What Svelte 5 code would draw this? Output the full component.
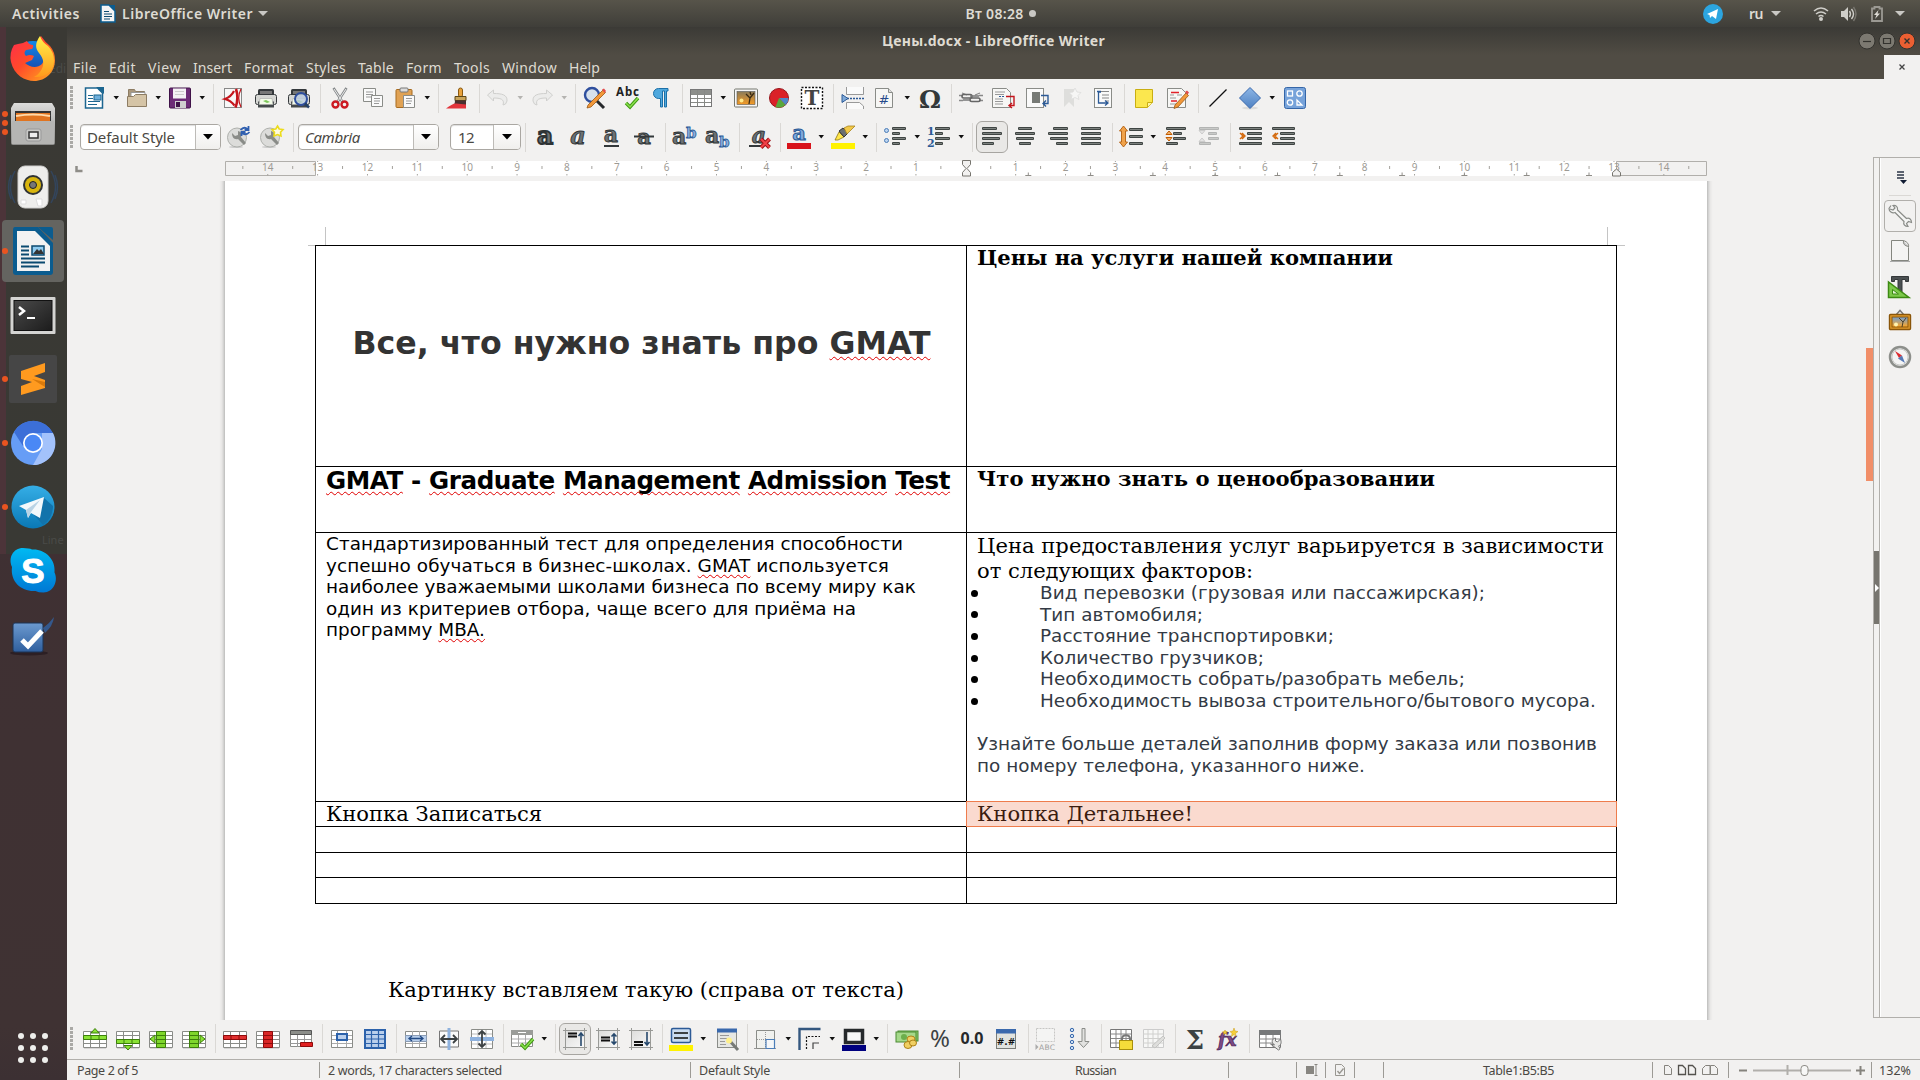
<script>
  // Spreads letters so a label takes exactly the given width.
  function fit(node, width) {
    const natural = node.getBoundingClientRect().width;
    const count = node.textContent.length;
    node.style.letterSpacing = (width - natural) / count + 'px';
  }

  // Turns item centres into the gaps between neighbouring flex items.
  const sizes = { sep: 1, v: 8, vd: 8 };
  function lay(items, start) {
    let right = start;
    return items.map(([name, at]) => {
      const w = sizes[name] ?? 24;
      const gap = at - w / 2 - right;
      right = at + w / 2;
      return { name, gap };
    });
  }

  const top = lay([
    ['new', 94], ['v', 116], ['open', 137], ['v', 158], ['save', 180], ['v', 202], ['sep', 213],
    ['pdf', 233], ['print', 266], ['preview', 299], ['sep', 320], ['cut', 340], ['copy', 373], ['paste', 405], ['v', 427], ['sep', 438],
    ['brush', 458], ['sep', 479], ['undo', 498], ['vd', 520], ['redo', 542], ['vd', 564], ['sep', 575],
    ['find', 595], ['spell', 628], ['pilcrow', 661], ['sep', 682], ['table', 701], ['v', 723], ['image', 746], ['chart', 779], ['textbox', 812], ['sep', 833],
    ['pagebreak', 853], ['field', 884], ['v', 907], ['omega', 930], ['sep', 951], ['link', 971], ['footnote', 1003], ['endnote', 1037], ['bookmark', 1071], ['crossref', 1103], ['sep', 1124],
    ['comment', 1144], ['track', 1177], ['sep', 1198], ['line', 1218], ['diamond', 1250], ['v', 1272], ['shapes', 1295]
  ], 74);
  const styleTools = lay([['upd', 239], ['newstyle', 272], ['sep', 293]], 221);
  const format = lay([
    ['sep', 526], ['bold', 545.5], ['italic', 579], ['under', 612], ['strike', 645], ['sep', 666], ['sup', 685], ['sub', 718], ['sep', 740], ['clear', 761], ['sep', 781],
    ['fcolor', 800], ['v', 822], ['hilite', 844], ['v', 866], ['sep', 877], ['bullets', 896], ['v', 918], ['numbers', 940], ['v', 962], ['sep', 973],
    ['left', 993], ['center', 1026], ['right', 1059], ['just', 1092], ['sep', 1113], ['spacing', 1132], ['v', 1154], ['pinc', 1177], ['pdec', 1210], ['sep', 1231], ['iinc', 1251], ['idec', 1284]
  ], 522);
  const bottom = lay([
    ['rowup', 95], ['rowdn', 128], ['coll', 161], ['colr', 194], ['sep', 215], ['delrow', 235], ['delcol', 268], ['deltbl', 301], ['sep', 322], ['selcell', 342], ['seltbl', 375], ['sep', 396],
    ['merge', 416], ['splitv', 449], ['splith', 482], ['sep', 503], ['optim', 522], ['v', 544], ['sep', 555], ['vtop', 575], ['vmid', 608], ['vbot', 641], ['sep', 662],
    ['bgcol', 681], ['v', 703], ['autofmt', 726.500], ['sep', 747], ['borders', 766], ['v', 788], ['bstyle', 810], ['v', 832], ['bcolor', 854], ['v', 876], ['sep', 887],
    ['money', 907], ['percent', 940], ['decimal', 972], ['numfmt', 1006], ['sep', 1028], ['caption', 1047], ['sort', 1080], ['sep', 1101], ['protect', 1122], ['unprotect', 1154], ['sep', 1175], ['sum', 1195], ['fx', 1228], ['sep', 1249], ['props', 1269.500]
  ], 74);
  const pressed = ['left', 'vtop'];

  const bars = (list, c = '#3f4543') => list.map(([x, y, w]) => `<rect x="${x}" y="${y}" width="${w}" height="3" rx="1" fill="${c}"/><path d="M${x + 1} ${y + 1.5}h${w - 2}" stroke="#8b908e" stroke-width=".8"/>`).join('');
  const glyph = (t, x, y, s, c, extra = '') => `<text x="${x}" y="${y}" font-size="${s}" fill="${c}" ${extra}>${t}</text>`;
  const serif = 'font-family="DejaVu Serif" font-weight="bold" stroke="#2e3335" stroke-width=".9"';
  const heavy = 'font-family="DejaVu Serif" font-weight="bold" stroke="#2e3335" stroke-width="1.8"';
  const grid = '<path d="M1 21h22" stroke="#bbb"/><path d="M.5 4.500h23v16h-23z" fill="#fff" stroke="#8a8c88"/><path d="M1 8.500h22M1 12.500h22M1 16.500h22M7.500 4v16M16.500 4v16" stroke="#8a8c88" fill="none"/>';
  const paper = '<path d="M3.500 2.500h13l4 4v15h-17z" fill="#f7f7f5" stroke="#8a8c88"/><path d="M16.500 2.500v4h4" fill="#ddd" stroke="#8a8c88"/>';
  const printer = '<rect x="4" y="3" width="16" height="8" rx="1.500" fill="#34383b"/><rect x="6" y="5" width="12" height="4" fill="#777"/><rect x="1.500" y="8.500" width="21" height="10" rx="2" fill="#d5d6d3" stroke="#34383b"/><path d="M4 15.500h16v6H4z" fill="#44494b"/><path d="M6 12.500h12l1 6H5z" fill="#f3fbe9" stroke="#aaa" stroke-width=".6"/><path d="M9 15l3-1 4 2-3 1z" fill="#7dc75a"/>';
  const vframe = '<rect x="2" y="3" width="20" height="18" fill="url(#gfr)"/><path d="M0 3.500h24M0 20.500h24M2.500 1v22M21.500 1v22" stroke="#999a97" fill="none"/>';

  const icons = {
    new: '<path d="M3.500 2h12l5 5v15h-17z" fill="#fff" stroke="#1c6690" stroke-width="1.500"/><path d="M14 1h8v7z" fill="#1c6690"/><path d="M6 9.500h5M6 12.500h5M6 15.500h12M6 18.500h9" stroke="#1c6690"/><rect x="12" y="9" width="7" height="5" fill="#6fb0dd" stroke="#1c6690"/>',
    open: '<path d="M3.500 3.500h6l1 2h9v5h-16z" fill="#a9977c" stroke="#8d7c63"/><path d="M6 6.500h14v5H6z" fill="#fff" stroke="#999"/><path d="M2.500 10.500h6l2-2h11v12h-19z" fill="#d5c4a6" stroke="#8d7c63"/>',
    save: '<rect x="1.500" y="2" width="21" height="20" rx="1" fill="#6c2c76" stroke="#3f1248"/><rect x="5" y="2.500" width="13" height="10" fill="#f4f2f4"/><path d="M7 5.500h9M7 8.500h9" stroke="#ccc"/><path d="M7 15h11v7H7z" fill="#cfcfcf"/><rect x="8" y="16" width="4" height="5" fill="#3f1248"/>',
    pdf: '<rect x="3.500" y="2.500" width="17" height="19" fill="#f7f7f7" stroke="#888"/><path d="M15 3c2 6 2 12-.5 18.500" stroke="#c4151c" stroke-width="2.600" fill="none"/><path d="M20 3c-3 6-3 12 0 18" stroke="#c4151c" stroke-width="1.200" fill="none"/><path d="M13 5c-2 4-5 6.500-9 8 4 1 7 3 9.500 6.500" stroke="#c4151c" stroke-width="2.200" fill="none"/>',
    print: printer,
    preview: printer + '<circle cx="14" cy="13" r="6" fill="#b9c9dd" fill-opacity=".8" stroke="#2f4f9e" stroke-width="2"/><path d="M18 17.500l4 4" stroke="#223f66" stroke-width="2.500"/>',
    cut: '<path d="M5.500 2l9 14M18.500 2l-9 14" stroke="#85888a" stroke-width="2.500"/><path d="M6 3l8 12M18 3l-8 12" stroke="#eee" stroke-width="1"/><circle cx="7.500" cy="18.500" r="3" fill="#f1f0ef" stroke="#cc1a22" stroke-width="2.400"/><circle cx="16.500" cy="18.500" r="3" fill="#f1f0ef" stroke="#cc1a22" stroke-width="2.400"/>',
    copy: '<path d="M2.500 2.500h12v13h-12z" fill="#fafafa" stroke="#8a8c88"/><path d="M5 6h7M5 8.500h7M5 11h6" stroke="#999"/><path d="M10.500 9.500h11v11h-11z" fill="#fafafa" stroke="#8a8c88"/><path d="M13 12.500h6M13 15h6M13 17.500h5" stroke="#999"/>',
    paste: '<rect x="3" y="3.500" width="16" height="18" rx="1" fill="#e0a254" stroke="#a76b1f"/><rect x="7" y="2" width="8" height="4" rx="1" fill="#ddd" stroke="#777"/><path d="M10.500 9.500h11v12h-11z" fill="#fafafa" stroke="#8a8c88"/><path d="M13 12.500h6M13 15h6M13 17.500h5" stroke="#999"/>',
    brush: '<rect x="12.500" y="2" width="4" height="9" rx="2" fill="#e8a23c" stroke="#8a5a12"/><path d="M9 10.500h11v4H9z" fill="#c9a45a" stroke="#5c4718"/><path d="M9 14.500h11v6H6c2-1 3-3 3-6z" fill="#4a3030"/><path d="M0 22.500c4-3 7-5 10-5l10 1v4z" fill="#e2343b"/>',
    undo: '<path d="M1.500 9l6-5v3.500c8 0 14 1 13.500 7.500q-1 4-4 4c2-6-3-7-9.500-7v3z" fill="#ececeb" stroke="#d0d0ce"/>',
    redo: '<path d="M22.500 9l-6-5v3.500c-8 0-14 1-13.500 7.500q1 4 4 4c-2-6 3-7 9.500-7v3z" fill="#ececeb" stroke="#d0d0ce"/>',
    find: '<circle cx="9" cy="9" r="7" fill="#d7e1ec" stroke="#2f4f9e" stroke-width="2.400"/><path d="M14 15l7 7" stroke="#26292b" stroke-width="3"/><path d="M5 19L20 4l2.500 2.500L8 21l-4 1z" fill="#f2983a" stroke="#9b5a17" stroke-width=".8"/><path d="M19 3.500l2-1 2 2.500-1.500 2z" fill="#e24b4b"/>',
    spell: glyph('Abc', 0, 10, 11.5, '#222', 'font-family="Noto Sans" font-weight="bold" textLength="23"') + '<path d="M10 17l4 4 8-9" stroke="#3f9a12" stroke-width="3.400" fill="none"/><path d="M10 17l4 4 8-9" stroke="#8be04e" stroke-width="1.500" fill="none"/>',
    pilcrow: '<path d="M19 2.500H9.500a5 5 0 0 0 0 10h2V21h2V5h2v16h2V5H19z" fill="#4fa8dd" stroke="#1d70a8" stroke-width="1"/>',
    table: '<rect x="1.500" y="3.500" width="21" height="17" fill="#fff" stroke="#777"/><rect x="2" y="4" width="20" height="4" fill="#8d8f8b"/><path d="M2 8.500h20M2 12.500h20M2 16.500h20M8.500 4v16M15.500 4v16" stroke="#888a86"/>',
    image: '<rect x=".5" y="3" width="23" height="18" rx="1" fill="#f6f6f6" stroke="#74776f"/><rect x="3" y="5.500" width="18" height="13" fill="url(#gsun)" stroke="#555" stroke-width=".6"/><circle cx="7.500" cy="14.500" r="2" fill="#ffe98a"/><path d="M15 18l1-6-4-4M16 12l4-5M17 9l-1-3" stroke="#3a2a12" stroke-width="1.300" fill="none"/>',
    chart: '<circle cx="12" cy="12" r="9.500" fill="#da2128" stroke="#98151b"/><path d="M12 12l9.500 0a9.500 9.500 0 0 1-3 7z" fill="#4f86c8"/><path d="M12 12l6.500 7a9.500 9.500 0 0 1-10 2z" fill="#59a83c"/>',
    textbox: '<rect x="1.500" y="1.500" width="21" height="21" fill="#fff" stroke="#111" stroke-width="1.400" stroke-dasharray="2 1.500"/>' + glyph('T', 12, 19, 20, '#444', 'font-family="DejaVu Serif" font-weight="bold" text-anchor="middle"'),
    pagebreak: '<path d="M5.500 1v7.500h17V1M5.500 23v-6.500h13l4 3.500v3" fill="#fafafa" stroke="#999"/><path d="M6 12.500h18" stroke="#2c5a96" stroke-width="1.400" stroke-dasharray="2 1"/><path d="M1 8.500l6 4-6 4z" fill="#7fa9d8" stroke="#2c5a96"/>',
    field: paper + glyph('#', 12, 18, 13, '#274b8c', 'font-family="DejaVu Sans" text-anchor="middle"'),
    omega: glyph('Ω', 12, 22, 25, '#33383a', 'font-family="DejaVu Serif" font-weight="bold" text-anchor="middle" textLength="22" lengthAdjust="spacingAndGlyphs"'),
    link: '<path d="M0 9.500h4M20 9.500h4M0 14.500h4M20 14.500h4M3 7l5 2M21 7l-5 2" stroke="#888" stroke-width="1.300"/><rect x="3" y="8.500" width="10" height="3.500" rx="1.700" fill="none" stroke="#666" stroke-width="1.600"/><rect x="11" y="12" width="10" height="3.500" rx="1.700" fill="none" stroke="#666" stroke-width="1.600"/><path d="M11 10h9M4 14h7" stroke="#777" stroke-width="1.600"/>',
    footnote: '<path d="M1.500 2.500h14l4 4v15h-18z" fill="#f7f7f5" stroke="#8a8c88"/><path d="M4 6h10M4 8.500h9M4 13h8M4 15.500h8M4 18h8" stroke="#999"/><path d="M15 10.500h8v9h-4M21 17l-3 2.500 3 2.500" stroke="#c4151c" stroke-width="1.400" fill="none"/><path d="M8 10.500h6" stroke="#2c5a96" stroke-dasharray="2 1"/>',
    endnote: '<rect x="1.500" y="2.500" width="17" height="19" fill="#fafafa" stroke="#8a8c88"/><rect x="7" y="6" width="8" height="11" fill="#777a76"/><path d="M16 9.500h7v8h-4M21 14.500l-3 3 3 3" stroke="#2c5a96" stroke-width="1.400" fill="none"/>',
    bookmark: '<path d="M5 3h10v18l-5-5-5 5z" fill="#dededc"/><path d="M16 2l2 4 4 .500-3 3 1 4-4-2-4 2 1-4-3-3 4-.500z" fill="#f6f6f5" stroke="#dcdcda" stroke-width=".8"/>',
    crossref: '<rect x="3.500" y="2.500" width="17" height="19" fill="#fafafa" stroke="#8a8c88"/><path d="M9 5.500h9M11 9h7M11 12h7M15 15h3" stroke="#888"/><path d="M10 6H7.500v11H16M14 14.500l3 2.500-3 2.500M6 5.500h4" stroke="#2c5a96" stroke-width="1.300" fill="none"/>',
    comment: '<path d="M3.500 3.500h17v13l-5 5h-12z" fill="#fbe74e" stroke="#c9ae12"/><path d="M15.500 21v-4.500h5" fill="#fff6a8" stroke="#c9ae12"/>',
    track: '<path d="M2.500 2.500h14l4 4v15h-18z" fill="#f7f7f5" stroke="#8a8c88"/><path d="M5 9h4M12 9h5M5 12h6M5 18h8" stroke="#999"/><path d="M6 6.500h8M6 15h6" stroke="#e02028" stroke-width="1.400"/><path d="M10 19L21 7l2.500 2.500L13 21l-4 1.500z" fill="#f2983a" stroke="#9b5a17" stroke-width=".8"/><path d="M20 6l2-1.500 2 2-1.500 2z" fill="#e24b4b"/>',
    line: '<path d="M3.500 20.500L20.500 3.500" stroke="#111" stroke-width="1.300"/>',
    diamond: '<ellipse cx="12" cy="22" rx="8" ry="1.500" fill="#dddcda"/><path d="M12 1.500l10.500 10.500L12 22.500 1.500 12z" fill="url(#gbl)" stroke="#3a69ad"/>',
    shapes: '<rect x="1.500" y="1.500" width="21" height="21" rx="2" fill="#77a3da" stroke="#3566a8"/><g fill="none" stroke="#fff" stroke-width="1.300"><rect x="4.500" y="5" width="5" height="5"/><circle cx="16.500" cy="7.500" r="2.700"/><circle cx="7" cy="16.500" r="2.700"/><path d="M14 19v-5l5 5z"/></g>',
    upd: '<ellipse cx="9" cy="22" rx="7" ry="1" fill="#ccc"/><circle cx="10" cy="12.500" r="9.500" fill="#dcdcda" stroke="#aeb0ac"/><path d="M5 8l3 3 3-1v-4c4 1 4 4 3 6l5 6-2 2-6-6c-4 1-6-2-6-6z" fill="#8a8c88"/><path d="M13.500 5q3.500-4 7-1M21.500 1v4h-4M22.500 7q-3.500 4-7 1M14.500 11V7h4" fill="none" stroke="#2f5fb0" stroke-width="1.800"/>',
    newstyle: '<ellipse cx="9" cy="22" rx="7" ry="1" fill="#ccc"/><circle cx="10" cy="12.500" r="9.500" fill="#dcdcda" stroke="#aeb0ac"/><path d="M5 8l3 3 3-1v-4c4 1 4 4 3 6l5 6-2 2-6-6c-4 1-6-2-6-6z" fill="#8a8c88"/><path d="M17.500 1l1.700 3 3.800.500-2.500 2.700.500 3.800-3.500-1.500L14 11l.500-3.800L12 4.500 15.800 4z" fill="#fffbe0" stroke="#eddc1c" stroke-width="1.600"/>',
    bold: glyph('a', 12, 19, 25, '#6c7173', heavy + ' text-anchor="middle"'),
    italic: glyph('a', 12, 19, 24, '#6c7173', serif + ' font-style="italic" text-anchor="middle"'),
    under: glyph('a', 12, 17, 22, '#6c7173', serif + ' text-anchor="middle"') + '<path d="M5 21h15" stroke="#33383a" stroke-width="2"/>',
    strike: glyph('a', 12, 19, 21, '#6c7173', serif + ' text-anchor="middle"') + '<path d="M2 11.500h20" stroke="#33383a" stroke-width="2"/>',
    sup: glyph('a', 0, 19, 22, '#6c7173', serif) + glyph('b', 14, 13, 15, '#8ab0e0', 'font-family="DejaVu Serif" font-weight="bold" stroke="#2c5a96" stroke-width=".8"'),
    sub: glyph('a', 0, 18, 22, '#6c7173', serif) + glyph('b', 14, 22, 15, '#8ab0e0', 'font-family="DejaVu Serif" font-weight="bold" stroke="#2c5a96" stroke-width=".8"'),
    clear: glyph('a', 11, 18, 22, '#6c7173', serif + ' font-style="italic" text-anchor="middle"') + '<path d="M1 21h12" stroke="#33383a" stroke-width="2"/><path d="M13 14l8.500 8.500M21.500 14L13 22.500" stroke="#9d0f14" stroke-width="4"/><path d="M13 14l8.500 8.500M21.500 14L13 22.500" stroke="#f04046" stroke-width="2"/>',
    fcolor: glyph('a', 12, 15, 21, '#7fa8dc', 'font-family="DejaVu Serif" font-weight="bold" stroke="#2c5a96" text-anchor="middle"') + '<path d="M0 18h24v6H0z" fill="#d8131b"/>',
    hilite: '<path d="M4 15l4-8 5 5-6 3z" fill="#ffe64a" stroke="#8a7410" stroke-width=".8"/><path d="M8 6l4-3 5 5-4 4z" fill="#6b6f70" stroke="#333"/><path d="M13 3l4-2h7l-8 8z" fill="#f2c94a" stroke="#a8841c" stroke-width=".8"/><path d="M0 18h24v6H0z" fill="#fff200"/>',
    bullets: '<circle cx="3.500" cy="5.500" r="2" fill="#bcd4ef" stroke="#4b7db8"/><circle cx="3.500" cy="15.500" r="2" fill="#bcd4ef" stroke="#4b7db8"/>' + bars([[9, 2, 14], [9, 7, 8], [9, 12, 14], [9, 17, 8]]),
    numbers: glyph('1', 0, 10, 11, '#2c5a96', 'font-family="DejaVu Serif" font-weight="bold"') + glyph('2', 0, 22, 11, '#2c5a96', 'font-family="DejaVu Serif" font-weight="bold"') + bars([[8, 2, 15], [8, 7, 8], [8, 12, 15], [8, 17, 8]]),
    left: bars([[2, 2, 15], [2, 7, 20], [2, 12, 18], [2, 17, 12]]),
    center: bars([[5, 2, 14], [2, 7, 20], [3, 12, 18], [6, 17, 12]]),
    right: bars([[7, 2, 15], [2, 7, 20], [4, 12, 18], [10, 17, 12]]),
    just: bars([[2, 2, 20], [2, 7, 20], [2, 12, 20], [2, 17, 20]]),
    spacing: '<path d="M4.500 1l4 5H6.500v11h2l-4 5-4-5h2V6h-2z" fill="#f0a24a" stroke="#b05d10" stroke-width=".9"/>' + bars([[10, 3, 14], [10, 10, 14], [10, 17, 14]]),
    pinc: bars([[2, 2, 20], [9, 7, 9], [9, 12, 13], [2, 17, 12]]) + '<path d="M5 6l3 3.500H2zM5 16l3-3.500H2z" fill="#f6b36a" stroke="#c05a00"/>',
    pdec: '<g opacity=".35">' + bars([[2, 2, 20], [11, 7, 9], [11, 12, 11], [2, 17, 12]]) + '<path d="M5 9l3-3.500H2zM5 13l3 3.500H2z" fill="#ccc" stroke="#888"/></g>',
    iinc: bars([[1, 2, 23], [9, 7, 15], [9, 12, 15], [1, 17, 23]]) + '<path d="M2 8l3 3-3 3M4 8l3 3-3 3" stroke="#d4690c" stroke-width="1.400" fill="none"/>',
    idec: bars([[1, 2, 23], [9, 7, 15], [9, 12, 15], [1, 17, 23]]) + '<path d="M5 8l-3 3 3 3M7 8l-3 3 3 3" stroke="#d4690c" stroke-width="1.400" fill="none"/>',
    rowup: grid + '<path d="M.5 8.500h23v4h-23z" fill="#8ae234" stroke="#3c7f0a"/><path d="M12 1.500l4 4.500H8z" fill="#8ae234" stroke="#3c7f0a"/><path d="M8 8.500v4M16 8.500v4" stroke="#3c7f0a"/>',
    rowdn: grid + '<path d="M.5 12.500h23v4h-23z" fill="#8ae234" stroke="#3c7f0a"/><path d="M12 23l4-4.500H8z" fill="#8ae234" stroke="#3c7f0a"/><path d="M8 12.500v4M16 12.500v4" stroke="#3c7f0a"/>',
    coll: grid + '<path d="M7.500 4.500h9v16h-9z" fill="#7fd62c" stroke="#3c7f0a"/><path d="M8 8.500h8M8 12.500h8M8 16.500h8" stroke="#3c7f0a"/><path d="M1 12l5-4v8z" fill="#8ae234" stroke="#3c7f0a"/>',
    colr: grid + '<path d="M7.500 4.500h9v16h-9z" fill="#7fd62c" stroke="#3c7f0a"/><path d="M8 8.500h8M8 12.500h8M8 16.500h8" stroke="#3c7f0a"/><path d="M23 12l-5-4v8z" fill="#8ae234" stroke="#3c7f0a"/>',
    delrow: grid + '<path d="M.5 8.500h23v4h-23z" fill="#e03030" stroke="#8f0a0a"/><path d="M8 8.500v4M16 8.500v4" stroke="#8f0a0a"/>',
    delcol: grid + '<path d="M7.500 4.500h9v16h-9z" fill="#d92626" stroke="#8f0a0a"/><path d="M8 8.500h8M8 12.500h8M8 16.500h8" stroke="#8f0a0a"/>',
    deltbl: '<path d="M1.500 4.500h21v15h-21z" fill="#fff" stroke="#8a8c88"/><path d="M1 12.500h21M1 16.500h21M8.500 8v12M15.500 8v12" stroke="#999"/><path d="M1.500 3.500h21v4h-21z" fill="#8c8e8a" stroke="#555"/><path d="M11.500 15.500h12v4h-12z" fill="#e02020" stroke="#8f0a0a"/>',
    selcell: '<path d="M1.500 3.500h21v17h-21z" fill="#fff" stroke="#8a8c88"/><path d="M2 8.500h20M2 12.500h20M2 16.500h20M7.500 4v16M16.500 4v16" stroke="#aaa"/><rect x="7" y="7" width="10" height="6" fill="#b9cfec" stroke="#2c62ab" stroke-width="2"/>',
    seltbl: '<rect x="2" y="3" width="20" height="18" fill="#b9cfec" stroke="#2c62ab" stroke-width="2"/><path d="M2 7.500h20M2 12h20M2 16.500h20M8.500 3v18M15.500 3v18" stroke="#2c62ab" stroke-width="1.200"/>',
    merge: '<path d="M1.500 4.500h21v16h-21z" fill="#fff" stroke="#8a8c88"/><path d="M8.500 4v16M15.500 4v16M2 16.500h20" stroke="#aaa"/><path d="M1.500 8.500h21v6h-21z" fill="#b9cfec" stroke="#8a9cb5"/><path d="M5 11.500h14M8 9l-3 2.500L8 14M16 9l3 2.500L16 14" stroke="#234b85" stroke-width="1.300" fill="none"/>',
    splitv: '<path d="M2.500 4h19v16h-19z" fill="#fafafa" stroke="#777"/><path d="M12 1v22" stroke="#8fb2de" stroke-width="3"/><path d="M4 12h16M8 8l-4 4 4 4M16 8l4 4-4 4" stroke="#3c4143" stroke-width="1.800" fill="none"/>',
    splith: '<path d="M1.500 2.500h21v19h-21z" fill="#fff" stroke="#8a8c88"/><path d="M2 7h20M2 17h20M8 3v18M16 3v18" stroke="#bbb"/><path d="M0 12h24" stroke="#8fb2de" stroke-width="4"/><path d="M12 4v16M8.500 7.500L12 4l3.500 3.500M8.500 16.500L12 20l3.500-3.500" stroke="#3c4143" stroke-width="1.800" fill="none"/>',
    optim: '<path d="M1.500 4.500h21v15h-21z" fill="#fff" stroke="#8a8c88"/><path d="M2 12h20M2 16h20M8.500 8v12M15.500 8v12" stroke="#aaa"/><path d="M1 3h22v5H1z" fill="#9a9c98"/><path d="M8 5.500h8" stroke="#fff"/><path d="M11 17l4 4 8-9" stroke="#3f9a12" stroke-width="3.400" fill="none"/><path d="M11 17l4 4 8-9" stroke="#8be04e" stroke-width="1.500" fill="none"/>',
    vtop: vframe + '<path d="M5 6.500h9M5 9.500h9" stroke="#111" stroke-width="2"/><path d="M18 19V6M15.500 9L18 6l2.500 3" stroke="#27496d" stroke-width="1.600" fill="none"/>',
    vmid: vframe + '<path d="M5 10.500h9M5 13.500h9" stroke="#111" stroke-width="2"/><path d="M18 7v10M15.500 9.500L18 7l2.500 2.500M15.500 14.500L18 17l2.500-2.500" stroke="#27496d" stroke-width="1.600" fill="none"/>',
    vbot: vframe + '<path d="M5 15h9M5 18h9" stroke="#111" stroke-width="2"/><path d="M18 5v13M15.500 15L18 18l2.500-3" stroke="#27496d" stroke-width="1.600" fill="none"/>',
    bgcol: '<rect x="2.500" y="1.500" width="19" height="14" rx="1.500" fill="#cadcf0" stroke="#2c5a96" stroke-width="1.500"/><path d="M5 6h14M5 11h14" stroke="#3c4143" stroke-width="2.200"/><path d="M0 18h24v6H0z" fill="#fff200"/>',
    autofmt: '<rect x="2.500" y="2.500" width="19" height="18" fill="#e6e7e4" stroke="#8a8c88"/><rect x="2" y="1.500" width="20" height="4" fill="#3a69ad"/><path d="M5 8.500h9M5 11.500h7M5 14.500h5M5 17.500h6" stroke="#999"/><path d="M14 13l9 10" stroke="#777a76" stroke-width="3"/><circle cx="14" cy="13.500" r="3" fill="#fff08a"/>',
    borders: '<path d="M0 21.500h22" stroke="#999"/><path d="M2.500 3.500h18v18h-18z" fill="#f0f1ee" stroke="#8a8c88"/><path d="M11.500 5v17M3 12.500h9" stroke="#999" stroke-dasharray="1 1"/><path d="M12 12.500h8.500v9H12z" fill="#f4f6f8" stroke="#4b7db8" stroke-width="1.200"/>',
    bstyle: '<path d="M1.500 23V2h21" stroke="#34577f" stroke-width="2.400" fill="none"/><path d="M8.500 22V9.500H22" stroke="#111" stroke-width="1.200" stroke-dasharray="2 1.500" fill="none"/><path d="M15 22v-6h6" stroke="#444" stroke-width="1.200" fill="none"/>',
    bcolor: '<rect x="3.500" y="3.500" width="17" height="12" fill="#f7f7f7" stroke="#26292b" stroke-width="3.500"/><path d="M0 18h24v6H0z" fill="#00007f"/>',
    money: '<rect x="3" y="4" width="20" height="10" fill="#8fcf6f" stroke="#4b8a32"/><rect x="1" y="5" width="20" height="10" fill="#a5d98a" stroke="#4b8a32"/><circle cx="9" cy="10" r="3" fill="#6cae4c"/><ellipse cx="16" cy="12" rx="4" ry="3" fill="#f0cf62" stroke="#ad8118"/><ellipse cx="13" cy="18" rx="4" ry="3.500" fill="#f0cf62" stroke="#ad8118"/><ellipse cx="18" cy="16" rx="3.500" ry="3" fill="#f0cf62" stroke="#ad8118"/>',
    percent: glyph('%', 12, 20, 24, '#3c4143', 'font-family="Noto Sans" text-anchor="middle"'),
    decimal: glyph('0.0', 12, 17, 16, '#26292b', 'font-family="Noto Sans" font-weight="bold" text-anchor="middle"'),
    numfmt: '<rect x="2.500" y="2.500" width="19" height="19" fill="#e1e3df" stroke="#7a7d79"/><rect x="2" y="2" width="20" height="4.500" fill="#3a69ad"/>' + glyph('#.#', 12, 18, 9, '#111', 'font-family="DejaVu Sans" font-weight="bold" text-anchor="middle"'),
    caption: '<rect x="1.500" y="1.500" width="18" height="13" fill="#f4f4f3" stroke="#c6c6c4" stroke-dasharray="2 1"/><path d="M.5 17v6l3-3z" fill="#aaa"/>' + glyph('ABC', 4, 23, 7.5, '#a0a09e', 'font-family="DejaVu Sans" textLength="16"'),
    sort: '<g fill="#cddff2" stroke="#3a69ad"><circle cx="4" cy="3" r="1.700"/><circle cx="4" cy="9" r="1.700"/><circle cx="4" cy="15" r="1.700"/><circle cx="4" cy="21" r="1.700"/></g><path d="M14 1.500h3v13h4l-5.500 6-5.500-6h4z" fill="#e2e2e0" stroke="#8a8c88"/>',
    protect: '<path d="M.5 2.500h21v18H.5z" fill="#fff" stroke="#777"/><path d="M1 7h20M1 11.500h20M1 16h20M6 3v17M11 3v17M16 3v17" stroke="#888"/><path d="M12 14v-2c0-5 8-5 8 0v2" stroke="#777" stroke-width="2" fill="none"/><rect x="9.500" y="13.500" width="13" height="9" fill="#f5dc3a" stroke="#a88f0e"/>',
    unprotect: '<path d="M1.500 2.500h20v18h-20z" fill="#f7f7f6" stroke="#ccc"/><path d="M1 7h20M1 11.500h20M1 16h20M6 3v17M11 3v17M16 3v17" stroke="#d0d0ce"/><path d="M10 19L21 9l2 2-10 10z" fill="#dededc" stroke="#c4c4c2"/>',
    sum: glyph('Σ', 12, 22, 26, '#3c4143', 'font-family="DejaVu Serif" font-weight="bold" text-anchor="middle"'),
    fx: glyph('fx', 2, 19, 18, '#7d4b86', 'font-family="DejaVu Serif" font-weight="bold" font-style="italic" stroke="#4c2255" stroke-width=".7"') + '<path d="M18 1l1 3 3 .500-2.500 2 .500 3-2-2-2.500 2 .500-3-2-2 3-.500zM9 3l.7 1.500 1.700.2-1.300 1 .3 1.700L9 6.500l-1.500 1 .3-1.700-1.200-1 1.700-.2z" fill="#f6cf3a" stroke="#c99a12" stroke-width=".5"/>',
    props: '<path d="M1.500 3.500h21v17h-21z" fill="#fff" stroke="#777"/><rect x="1" y="3" width="22" height="5" fill="#77797a"/><path d="M1 12h21M1 16h21M8 8v12M15 8v12" stroke="#888"/><path d="M22.500 12l-3 3-2-1v-3c-4 1-4 4-2 6l1 1-4-1 8 6c2 0 1-3 0-4 3-1 3-4 2-7z" fill="#e8e8e6" stroke="#777"/>'
  };
  icons.deck = '<path d="M8 5h7M8 8h7M8 11h7" stroke="#2b3446" stroke-width="1.400"/><path d="M11 13h7l-3.500 4z" fill="#111c33"/>';
  icons.wrench = '<path d="M3 1.500l-2 3c0 3 3 5 6 4l9 9c-1 3 1 5 4 5l-1.500-3 2-2 3 1c0-3-2-5-5-4L9.500 6C10 3 8 1 5 1.500L7 4 5 6 2 5" fill="#f5f5f4" stroke="#8a8c88" stroke-width="1.200"/>';
  icons.page = '<path d="M2 22.500h20" stroke="#aaa"/><path d="M3.500 1.500h12q6 2 5 7v13h-17z" fill="#f4f4f3" stroke="#84867f"/><path d="M15.500 1.500q-1 5 5 6" fill="#ccc" stroke="#84867f"/>';
  icons.styles = '<path d="M3.500 1.500h17v5h-3v-2h-3.500v16h-4v-16H6.500v2h-3z" fill="#4b5052" stroke="#34383a"/><path d="M.5 7v15.500H21z" fill="#7cc94a" stroke="#3c8a12" stroke-width="1.500"/><path d="M4.500 14.500v4.500h6z" fill="#e3f4d7" stroke="#3c8a12"/>';
  icons.gallery = '<path d="M8 6l4-4.500L16 6" stroke="#777" stroke-width="1.500" fill="none"/><rect x="1.500" y="5.500" width="21" height="15" rx="1" fill="#e39d2d" stroke="#8a560a" stroke-width="1.400"/><rect x="4" y="8" width="16" height="10" fill="url(#gsky)" stroke="#8a560a"/><circle cx="8" cy="15.500" r="2" fill="#fff3b0"/><path d="M14 18l1-5-4-4M15 13l3-4" stroke="#49402c" fill="none"/>';
  icons.compass = '<circle cx="12" cy="12" r="10" fill="#f4f4f4" stroke="#8d8f8b" stroke-width="2.500"/><circle cx="12" cy="12" r="8" fill="none" stroke="#c9cac7"/><path d="M7 6l7 4.500L11 13z" fill="#dc2b30"/><path d="M17 18l-7-4.500L14 10.500z" fill="#5679b5"/>';

  const menus = [['File', 24], ['Edit', 27], ['View', 33], ['Insert', 39], ['Format', 50], ['Styles', 40], ['Table', 36], ['Form', 36], ['Tools', 36], ['Window', 55], ['Help', 31]];

  const cm = 49.86;
  const origin = 899.5;
  const label = 898.8;
  const marks = Array.from({ length: 29 }, (_, i) => i - 14).filter((n) => n !== 0);
  const halves = Array.from({ length: 30 }, (_, i) => i - 15 + 0.5).filter((n) => Math.abs(n) < 15);
  const tabs = Array.from({ length: 10 }, (_, i) => (i + 1) * 62.3);

  const bulletLines = [
    ['Вид перевозки (грузовая или пассажирская);', 445],
    ['Тип автомобиля;', 163],
    ['Расстояние транспортировки;', 294],
    ['Количество грузчиков;', 224],
    ['Необходимость собрать/разобрать мебель;', 425],
    ['Необходимость вывоза строительного/бытового мусора.', 556]
  ];

  const dock = [
    { n: 'firefox', d: 0 }, { n: 'files', d: 3 }, { n: 'speaker', d: 0 }, { n: 'writer', d: 1 }, { n: 'terminal', d: 0 },
    { n: 'sublime', d: 1 }, { n: 'chromium', d: 1 }, { n: 'telegram', d: 1 }, { n: 'skype', d: 0 }, { n: 'todo', d: 0 }
  ];
  const apps = {
    firefox: '<circle cx="24" cy="25" r="19" fill="url(#gffb)"/><path d="M5 10q-5 8-3 17c3 13 14 19 23 19 12 0 21-9 21-21q0-8-5-14-5-4-9-10c-4 5-5 11-1 16 3 4 5 8 2 12-5 5-13 3-17-1l7-3 2-4q-4-2-8 0-3-3 0-6l6-1q2-2 1-4-4 0-6-4l-4 2-5 1z" fill="url(#gff)"/><path d="M31 1c-5 7-5 12-1 17 5 6 6 12 1 19q-3 4-6 5c13 1 20-7 20-16q0-9-6-15-6-4-8-10z" fill="url(#gffy)"/>',
    files: '<path d="M5 4h38l3 5v35q0 2-2 2H4q-2 0-2-2V9z" fill="url(#gcab)"/><rect x="6" y="12" width="36" height="11" fill="#333"/><path d="M7 14h34v8H7z" fill="#e07420"/><path d="M7 17q17-3 34 0" stroke="#ffd9a8" stroke-width="2" fill="none"/><path d="M3 22h42v23H3z" fill="#b5b5b3"/><rect x="17" y="30" width="15" height="12" rx="2" fill="#c9c9c7" stroke="#999"/><rect x="20" y="33" width="9" height="6" fill="#eee" stroke="#333" stroke-width="1.500"/>',
    speaker: '<path d="M6 8q-9 16 0 32M42 8q9 16 0 32M2 12q-5 12 0 24M46 12q5 12 0 24" stroke="#33455c" stroke-width="1.500" fill="none"/><rect x="9" y="3" width="30" height="42" rx="7" fill="#eeeeec" stroke="#cfcfcd"/><circle cx="24" cy="22" r="10" fill="#2f3334"/><circle cx="24" cy="22" r="8" fill="#d8b50e"/><circle cx="24" cy="22" r="3.500" fill="#777" stroke="#222"/><path d="M12 37h5v4h-5zM27 36h6v7h-4z" fill="#fff" stroke="#ddd"/>',
    writer: '<path d="M6 0h23l15 16v29q0 3-3 3H7q-3 0-3-3V3q0-3 2-3z" fill="#0b5c8f"/><path d="M8 4h18l15 15v25H8z" fill="#f2f2f2"/><path d="M29 0h13q2 0 2 2v11z" fill="#0b5c8f"/><path d="M12 19.500h8M12 23.500h8M12 27.500h8M12 31.500h24M12 35.500h24M12 39.500h18" stroke="#0b4a70" stroke-width="2"/><rect x="23" y="19" width="12" height="9" fill="#8ecbf0" stroke="#0b4a70" stroke-width="1.500"/><path d="M24 27l4-5 2 2 2-2 3 5z" fill="#333"/>',
    terminal: '<rect x="1.500" y="6" width="45" height="37" rx="1" fill="#d4d4d2"/><rect x="5" y="9.500" width="38" height="30" fill="url(#gterm)" stroke="#111"/><path d="M10 16l5 4-5 4" stroke="#fff" stroke-width="2.500" fill="none"/><path d="M18 27h8" stroke="#fff" stroke-width="2"/>',
    sublime: '<rect x="0" y="0" width="48" height="48" rx="2" fill="#464646"/><path d="M12 16L36 8v9l-11 4 11 4v8l-24 7v-9l11-4-11-3z" fill="#ff9a1f"/><path d="M23 24l13 3v5z" fill="#d97a0c"/>',
    chromium: '<circle cx="24" cy="24" r="22" fill="#669df6"/><path d="M5 13a22 22 0 0 1 39 1H24L14 27z" fill="#3c6fd8"/><path d="M44 14a22 22 0 0 1-20 32l9-16V14z" fill="#a3c2fb"/><circle cx="24" cy="24" r="10" fill="#fff"/><circle cx="24" cy="24" r="8.300" fill="#4a88f5"/>',
    telegram: '<circle cx="24" cy="24" r="21.500" fill="url(#gtg)"/><path d="M35 15l9 8q0 12-10 19L25 32z" fill="#1273ab"/><path d="M10 23l25-9-4 21-9-5-3 5-2-8z" fill="#f3f8fb"/><path d="M17 27l14-10-9 12-3 6z" fill="#b9d3e5"/>',
    skype: '<path d="M14 1q6 0 9 1.500c12-1 24 9 22.500 23 4 8-1 20-11 20q-5 0-8-1.500C13 45 1 35 3 20-1 11 4 1 14 1z" fill="url(#gsk)"/><text x="24" y="36" font-family="Liberation Sans" font-weight="bold" font-size="35" fill="#fff" stroke="#fff" stroke-width="1" text-anchor="middle">S</text>',
    todo: '<ellipse cx="20" cy="37" rx="19" ry="2.500" fill="#2c1f24"/><rect x="4" y="7" width="30" height="29" rx="2" fill="url(#gtd)" stroke="#1d3557"/><path d="M34 12q6-4 11-11-1 9-9 16z" fill="#34588c"/><path d="M13 24l6 6 14-15" stroke="#fff" stroke-width="5" fill="none"/>'
  };
</script>

<svg class="defs" width="0" height="0">
  <defs>
    <linearGradient id="gsun" x2="0" y2="1"><stop offset="0" stop-color="#8a7b5a" /><stop offset="1" stop-color="#f59a23" /></linearGradient>
    <linearGradient id="gsky" x2="0" y2="1"><stop offset="0" stop-color="#6f9ccf" /><stop offset="1" stop-color="#ffa726" /></linearGradient>
    <linearGradient id="gbl" x2="0" y2="1"><stop offset="0" stop-color="#8db6e6" /><stop offset="1" stop-color="#4f81c2" /></linearGradient>
    <linearGradient id="gfr" x2="1" y2="1"><stop offset="0" stop-color="#dcdcda" /><stop offset="1" stop-color="#fafafa" /></linearGradient>
    <linearGradient id="gff" x1="0" x2="1" y2="1"><stop offset="0" stop-color="#ff2b4e" /><stop offset=".45" stop-color="#ff4a2a" /><stop offset="1" stop-color="#ffb01e" /></linearGradient>
    <linearGradient id="gffb" x2="0" y2="1"><stop offset="0" stop-color="#1187e8" /><stop offset="1" stop-color="#1a3a9c" /></linearGradient>
    <linearGradient id="gffy" x2="0" y2="1"><stop offset="0" stop-color="#fff04a" /><stop offset="1" stop-color="#ff9a1c" /></linearGradient>
    <linearGradient id="gcab" x2="0" y2="1"><stop offset="0" stop-color="#dcdcda" /><stop offset="1" stop-color="#8d8d8b" /></linearGradient>
    <linearGradient id="gterm" x2="1" y2="1"><stop offset="0" stop-color="#4a4a4a" /><stop offset="1" stop-color="#1c1c1c" /></linearGradient>
    <linearGradient id="gtg" x2="0" y2="1"><stop offset="0" stop-color="#35aee6" /><stop offset="1" stop-color="#0a78b5" /></linearGradient>
    <linearGradient id="gsk" x2="0" y2="1"><stop offset="0" stop-color="#00b9f2" /><stop offset="1" stop-color="#0078d4" /></linearGradient>
    <linearGradient id="gtd" x2="0" y2="1"><stop offset="0" stop-color="#6c9ad0" /><stop offset="1" stop-color="#2f5f9e" /></linearGradient>
  </defs>
</svg>

{#snippet items(list)}
  {#each list as it}
    {#if it.name === 'sep'}
      <i class="sep" style="margin-left:{it.gap}px"></i>
    {:else if it.name === 'v' || it.name === 'vd'}
      <svg class="arrow" class:dim={it.name === 'vd'} style="margin-left:{it.gap}px" width="8" height="6"><path d="M1.500 1h5.500L4.250 4.500z" /></svg>
    {:else}
      <svg class="ic" class:on={pressed.includes(it.name)} style="margin-left:{it.gap}px" width="24" height="24" viewBox="0 0 24 24">{@html icons[it.name]}</svg>
    {/if}
  {/each}
{/snippet}

{#snippet handle()}
  <svg class="handle" width="3" height="24"><path d="M1.500 0v24" stroke="#aaa9a6" stroke-width="3" stroke-dasharray="3 1" /></svg>
{/snippet}

<div class="screen">
  <header class="panel">
    <div class="pl">
      <span class="act" use:fit={68}>Activities</span>
      <svg class="mini" width="14" height="17" viewBox="0 0 14 17"><path d="M0 0h8l6 6v11H0z" fill="#f4f4f4" stroke="#0b5c8f" stroke-width="1.500" /><path d="M8 0h6v6z" fill="#0b5c8f" /><path d="M3 6.500h5M3 9h8M3 11.500h8M3 14h6" stroke="#0b4a70" /></svg>
      <span use:fit={131}>LibreOffice Writer</span>
      <svg class="pd" width="10" height="6"><path d="M0 0h10L5 5z" fill="#c9c8c4" /></svg>
    </div>
    <div class="clock"><span use:fit={58}>Вт 08:28</span><i></i></div>
    <div class="pr">
      <svg width="20" height="20" viewBox="0 0 20 20"><circle cx="10" cy="10" r="10" fill="#2ca5e0" /><path d="M4 10l11-5-2 10-4-3-2 2-.500-3z" fill="#fff" /></svg>
      <span class="ru" use:fit={14}>ru</span>
      <svg class="d1" width="10" height="6"><path d="M0 0h10L5 5z" fill="#c9c8c4" /></svg>
      <svg class="wf" width="14" height="14" viewBox="0 0 14 14"><g fill="none" stroke="#cfcec9" stroke-width="1.600"><path d="M0 4q7-6 14 0M2 7q5-4 10 0M4.500 9.500q2.500-2 5 0" /></g><circle cx="7" cy="12" r="2" fill="#cfcec9" /></svg>
      <svg class="vo" width="16" height="14" viewBox="0 0 16 14"><path d="M0 4h3l4-4v14l-4-4H0z" fill="#cfcec9" /><path d="M8.500 4q2 3 0 6M10.500 2q4 5 0 10" stroke="#cfcec9" stroke-width="1.400" fill="none" /><path d="M12.500 0q5 7 0 14" stroke="#77756e" stroke-width="1.400" fill="none" /></svg>
      <svg class="ba" width="12" height="16" viewBox="0 0 12 16"><path d="M1 2.500h2.500V1h5v1.500H11V15H1z" fill="none" stroke="#9b9993" stroke-width="1.800" /><path d="M7.500 4L3 9h2.500L4 13l5-5.500H6.500z" fill="#dedcd6" /></svg>
      <svg class="d2" width="10" height="6"><path d="M0 0h10L5 5z" fill="#c9c8c4" /></svg>
    </div>
  </header>

  <div class="body">
    <aside class="dock">
      <span class="ghost g1">Edi</span>
      <span class="ghost g2">Line</span>
      {#each dock as a}
        <div class="app {a.n}" class:active={a.n === 'writer'}>
          <div class="dots">{#each Array(a.d) as _}<i></i>{/each}</div>
          <svg width="48" height="48" viewBox="0 0 48 48">{@html apps[a.n]}</svg>
        </div>
      {/each}
      <div class="grid9">{#each Array(9) as _}<i></i>{/each}</div>
    </aside>

    <main>
      <div class="title">
        <span use:fit={223}>Цены.docx - LibreOffice Writer</span>
        <svg width="58" height="18" viewBox="0 0 58 18">
          <circle cx="9" cy="9" r="8" fill="#7c7971" stroke="#33322e" /><path d="M5 9.500h8" stroke="#33322e" stroke-width="1.200" />
          <circle cx="29" cy="9" r="8" fill="#7c7971" stroke="#33322e" /><path d="M25.500 6.500h7v5h-7z" stroke="#33322e" fill="none" stroke-width="1.200" />
          <circle cx="49" cy="9" r="8" fill="#ec5f32" stroke="#33322e" /><path d="M46.500 6.500l5 5m0-5l-5 5" stroke="#33322e" stroke-width="1.400" />
        </svg>
      </div>
      <nav class="menu">
        {#each menus as [m, w]}<span use:fit={w}>{m}</span>{/each}
        <div class="closedoc"><svg width="6" height="6"><path d="M.5.5l5 5m0-5l-5 5" stroke="#444" stroke-width="1.300" /></svg></div>
      </nav>
      <div class="tb t1">{@render handle()}{@render items(top)}</div>
      <div class="tb t2">
        {@render handle()}
        <div class="combo c1"><span use:fit={88}>Default Style</span><b><svg width="10" height="6"><path d="M0 0h10L5 5.500z" /></svg></b></div>
        {@render items(styleTools)}
        <div class="combo c2"><span use:fit={55}><em>Cambria</em></span><b><svg width="10" height="6"><path d="M0 0h10L5 5.500z" /></svg></b></div>
        <div class="combo c3"><span use:fit={16}>12</span><b><svg width="10" height="6"><path d="M0 0h10L5 5.500z" /></svg></b></div>
        {@render items(format)}
      </div>

      <div class="work">
        <div class="editor">
          <svg class="ruler" width="1806" height="24" viewBox="0 0 1806 24">
            <path d="M9.500 9v5h6" stroke="#8f8d88" stroke-width="2.500" fill="none" />
            <rect x="249" y="4" width="1300" height="15" fill="#fff" />
            <path d="M158.500 4.500h90v14h-90zM1549.500 4.500h90v14h-90z" fill="#f2f1f0" stroke="#b1afab" />
            {#each halves as h}<path d="M{label + h * cm} 9v3" stroke="#a3a19c" />{/each}
            {#each marks as n}
              <path d="M{label + n * cm} 4v1M{label + n * cm} 17v1.500" stroke="#a3a19c" />
              <text x={label + n * cm} y="14">{Math.abs(n)}</text>
            {/each}
            {#each tabs as t}<path d="M{origin + t - 0.5} 15.500v3M{origin + t - 3.5} 18.500h6" stroke="#8f8d88" />{/each}
            <path d="M895.500 3.500h8v4l-3.500 4 3.500 4v3.500h-8v-3.500l3.500-4-3.500-4z" fill="#f2f1f0" stroke="#77756f" />
            <path d="M1545.500 19v-3.500l4-3.500 4 3.500v3.500z" fill="#f2f1f0" stroke="#77756f" />
          </svg>
          <div class="canvas">
            <div class="page">
              <div class="marks"><i></i><i></i></div>
              <div class="doc">
                <div class="cell r1 h1"><p><span use:fit={578}>Все, что нужно знать про <u>GMAT</u></span></p></div>
                <div class="cell r1 serif b"><p><span use:fit={416}>Цены на услуги нашей компании</span></p></div>
                <div class="cell r2 h2"><p><span use:fit={624}><u>GMAT</u> - <u>Graduate</u> <u>Management</u> <u>Admission</u> <u>Test</u></span></p></div>
                <div class="cell r2 serif b"><p><span use:fit={458}>Что нужно знать о ценообразовании</span></p></div>
                <div class="cell r3 sans">
                  <p><span use:fit={577}>Стандартизированный тест для определения способности</span></p>
                  <p><span use:fit={563}>успешно обучаться в бизнес-школах. <u>GMAT</u> используется</span></p>
                  <p><span use:fit={590}>наиболее уважаемыми школами бизнеса по всему миру как</span></p>
                  <p><span use:fit={530}>один из критериев отбора, чаще всего для приёма на</span></p>
                  <p><span use:fit={159}>программу <u>MBA.</u></span></p>
                </div>
                <div class="cell r3">
                  <div class="serif lead"><p><span use:fit={627}>Цена предоставления услуг варьируется в зависимости</span></p><p><span use:fit={276}>от следующих факторов:</span></p></div>
                  <ul class="sans soft">{#each bulletLines as [t, w]}<li><i></i><span use:fit={w}>{t}</span></li>{/each}</ul>
                  <div class="sans soft"><p><span use:fit={620}>Узнайте больше деталей заполнив форму заказа или позвонив</span></p><p><span use:fit={388}>по номеру телефона, указанного ниже.</span></p></div>
                </div>
                <div class="cell serif"><p><span use:fit={216}>Кнопка Записаться</span></p></div>
                <div class="cell serif sel"><p><span use:fit={216}>Кнопка Детальнее!</span></p></div>
                {#each Array(6) as _}<div class="cell"></div>{/each}
              </div>
              <p class="after"><span use:fit={516}>Картинку вставляем такую (справа от текста)</span></p>
            </div>
            <div class="scroll"></div>
          </div>
        </div>
        <aside class="side">
          <div class="split"><div><svg width="4" height="8"><path d="M0 0l4 4-4 4z" fill="#fff" /></svg></div></div>
          <div class="decks">
            {#each ['deck', 'wrench', 'page', 'styles', 'gallery', 'compass'] as s}
              <div class="sb sb-{s}"><svg width="24" height="24" viewBox="0 0 24 24">{@html icons[s]}</svg></div>
            {/each}
          </div>
        </aside>
      </div>

      <div class="tb t3">{@render handle()}{@render items(bottom)}</div>
      <footer>
        <div class="s1"><span use:fit={61}>Page 2 of 5</span></div>
        <div class="s2"><span use:fit={174}>2 words, 17 characters selected</span></div>
        <div class="s3"><span use:fit={71}>Default Style</span></div>
        <div class="s4"><span use:fit={41}>Russian</span></div>
        <div class="s5"></div>
        <div class="s6"><svg width="14" height="14"><path d="M1 3h8v8H1z" fill="#888681" /><path d="M9.500 1.500h3M9.500 12.500h3M11 2v10" stroke="#888681" fill="none" /></svg></div>
        <div class="s7"><svg width="14" height="14"><path d="M1.500 1.500h6l3 3v8h-9z" fill="none" stroke="#999791" /><path d="M3.500 8l2 2.500 4-5" stroke="#999791" stroke-width="1.400" fill="none" /></svg></div>
        <div class="s8"></div>
        <div class="s9"><span use:fit={71}>Table1:B5:B5</span></div>
        <div class="s10"><svg width="58" height="14"><g fill="none"><path d="M1.500 2.500h4l3 3v6h-7z" stroke="#85837d" /><path d="M15.500 2.500h4l3 3v6h-7zM25.500 2.500h4l3 3v6h-7z" stroke="#54524d" stroke-width="1.300" /><path d="M39.500 5.500l3-3h4.500v9h-7.500zM47.500 2.500h4l3 3v6h-7z" stroke="#85837d" /></g></svg></div>
        <div class="s11"><svg width="130" height="14"><path d="M2 7.500h8M119 7.500h9M123.500 3v9" stroke="#85837d" stroke-width="2" /><path d="M16 7.500h98" stroke="#b1afab" stroke-width="2" /><path d="M50.500 2v10" stroke="#b1afab" stroke-width="2" /><rect x="64" y="2.500" width="7" height="10" rx="3" fill="#f7f7f6" stroke="#8f8d88" /></svg></div>
        <div class="s12"><span use:fit={32}>132%</span></div>
      </footer>
    </main>
  </div>
</div>

<style>
  :global(body) { margin: 0; overflow: hidden; background: #f2f1f0; }
  .defs { position: absolute; }
  p, ul { margin: 0; padding: 0; list-style: none; }
  svg { display: block; flex: none; overflow: visible; }
  .screen { width: 1920px; height: 1080px; display: flex; flex-direction: column; overflow: hidden; font: 14px "Noto Sans", "Open Sans", sans-serif; color: #4a4843; }
  span { white-space: nowrap; }
  .panel { height: 27px; display: grid; grid-template-columns: 1fr auto 1fr; align-items: center; background: linear-gradient(#57544a, #3f3e39); color: #dedbd3; font-weight: 600; font-size: 14px; line-height: 26px; }
  .pl, .pr, .clock { display: flex; align-items: center; height: 26px; }
  .act { margin-left: 12px; }
  .mini { margin: 0 7px 0 21px; }
  .pd { margin-left: 5px; }
  .clock { width: 66px; gap: 5px; margin-left: 77px; }
  .clock i { width: 7px; height: 7px; border-radius: 50%; background: #c9c8c4; flex: none; }
  .pr { justify-content: flex-end; }
  .ru { margin-left: 26px; }
  .d1 { margin-left: 8px; }
  .wf { margin-left: 33px; }
  .vo { margin-left: 13px; }
  .ba { margin-left: 14px; }
  .d2 { margin: 0 15px 0 12px; }

  .body { display: flex; flex: 1; min-height: 0; }
  .dock { width: 67px; flex: none; position: relative; display: flex; flex-direction: column; background: linear-gradient(90deg, #4c3439 6px, transparent 6px) 0 0 / 100% 527px no-repeat, linear-gradient(#3a3934, #393934) 0 0 / 100% 527px no-repeat, linear-gradient(#49333a, #3f3033 440px, #3f3233 95%, #3c3033); }
  .ghost { position: absolute; font-size: 12px; color: #4a4b48; }
  .g1 { left: 49px; top: 33px; }
  .g2 { left: 42px; top: 505px; font-size: 11px; }
  .app { height: 62px; margin: 0 3px 2px 2px; display: flex; align-items: center; border-radius: 4px; position: relative; }
  .app.firefox { margin-top: 1px; }
  .app.active { background: #646460; }
  .app svg { margin-left: 1px; }
  .app.todo svg { margin-top: 10px; }
  .dots { width: 6px; display: flex; flex-direction: column; gap: 3px; align-items: flex-start; }
  .dots i { width: 6px; height: 6px; border-radius: 50%; background: #e95420; }
  .grid9 { margin: auto 0 17px 18px; display: grid; grid-template-columns: repeat(3, 6px); gap: 6px; }
  .grid9 i { width: 6px; height: 6px; border-radius: 50%; background: #eeeeec; }

  main { width: 1853px; display: flex; flex-direction: column; background: #f2f1f0; }
  .title { height: 28px; display: flex; align-items: center; background: linear-gradient(#3b3a36, #504c44); color: #dfdbd2; font-weight: 700; font-size: 14px; }
  .title span { margin: -2px 0 0 815px; }
  .title svg { margin-left: auto; margin-right: 4px; }
  .menu { height: 24px; display: flex; align-items: center; gap: 12px; padding-left: 6px; background: #504c44; color: #dfdbd2; font-size: 14px; line-height: 24px; }
  .menu span { padding-top: 1px; }
  .closedoc { margin-left: auto; width: 36px; height: 24px; background: #f2f1f0; display: grid; place-items: center; }
  .tb { display: flex; align-items: center; box-sizing: border-box; flex: none; }
  .t1 { height: 38px; }
  .t2 { height: 40px; }
  .t3 { height: 39px; padding-bottom: 2px; }
  .handle { margin-left: 3px; margin-right: 1px; }
  .sep { width: 1px; height: 29px; background: #dad8d5; flex: none; }
  .arrow path { fill: #111; }
  .arrow.dim path { fill: #b5b4b1; }
  .on { background: #e9e8e6; outline: 1px solid #a7a5a1; outline-offset: 3px; border-radius: 2px; box-shadow: 0 0 0 3px #e9e8e6; }
  .combo { height: 26px; box-sizing: border-box; border: 1px solid #aaa7a2; border-radius: 4px; background: #fff; display: flex; justify-content: space-between; align-items: center; font-size: 15px; overflow: hidden; box-shadow: inset 0 1px 1px #ddd; padding-left: 6px; flex: none; }
  .combo b { width: 26px; height: 100%; border-left: 1px solid #bdbbb7; display: grid; place-items: center; background: linear-gradient(#fff, #f0efed); }
  .combo span { line-height: 24px; }
  .c1 { width: 141px; margin-left: 6px; }
  .c2 { width: 141px; margin-left: 4.5px; }
  .c1 b, .c2 b { width: 24px; }
  .c3 { width: 71px; margin-left: 11px; padding-left: 7px; }

  .work { height: 863px; display: flex; flex: none; }
  .editor { width: 1806px; display: flex; flex-direction: column; }
  .ruler text { font: 10px "Noto Sans", sans-serif; fill: #9d9a94; text-anchor: middle; }
  .canvas { flex: 1; min-height: 0; overflow: hidden; display: flex; justify-content: space-between; padding-left: 158px; }
  .page { width: 1482px; box-sizing: border-box; height: 1100px; margin-top: -10px; padding: 56px 0 0 83px; background: #fff; box-shadow: 0 0 5px #888; flex: none; clip-path: inset(10px -8px 0 -8px); }
  .marks { display: flex; justify-content: space-between; width: 1317px; height: 19px; box-sizing: border-box; border-bottom: 1px solid #c4c4c4; }
  .marks i { width: 1px; background: #c4c4c4; margin: 0 17px; }
  .doc { width: 1301px; margin: -1px 0 0 7px; display: grid; grid-template-columns: 651px 650px; grid-template-rows: 221px 66px 269px 25px 26px 25px 26px; border-left: 1px solid #000; border-top: 1px solid #000; color: #000; background: #fff; }
  .cell { box-sizing: border-box; border-right: 1px solid #000; border-bottom: 1px solid #000; padding-left: 10px; min-width: 0; }
  u { text-decoration: underline wavy #e00000 1px; text-underline-offset: 2px; text-decoration-skip-ink: none; }
  .h1 { font: bold 31.6px "DejaVu Sans", sans-serif; color: #333; padding: 79px 0 0 36.500px; }
  .h1 p { line-height: 37px; }
  .h2 { font: bold 24.6px "DejaVu Sans", sans-serif; padding-top: 1px; }
  .h2 p { line-height: 26px; }
  .serif { font: 21.1px "DejaVu Serif", serif; }
  .serif p { line-height: 24.5px; }
  .lead p:first-child { line-height: 26px; }
  .lead p:last-child { line-height: 23px; }
  .b { font-weight: bold; }
  .sans { font: 18.4px "DejaVu Sans", sans-serif; }
  .sans p, li { line-height: 21.6px; height: 21.6px; }
  .soft { color: #333a44; }
  ul.sans { margin-bottom: 21.6px; }
  li { display: flex; align-items: center; }
  li i { width: 7px; height: 7px; border-radius: 50%; background: #000; margin: 1px 62px 0 -6px; flex: none; }
  .sel { position: relative; background: #fadacf; color: #3b1c10; border-color: #ee7c4c; box-shadow: -1px -1px 0 #ee7c4c, 0 -1px 0 #ee7c4c, -1px 0 0 #ee7c4c; }
  .after { font: 21.1px/24.5px "DejaVu Serif", serif; color: #000; margin: 74px 0 0 80px; }
  .scroll { width: 7px; height: 133px; margin-top: 167px; background: #f18e68; }

  .side { width: 47px; height: 861px; display: flex; box-sizing: border-box; border: 1px solid #b1afab; border-right: 0; }
  .split { width: 5px; border-right: 1px solid #b1afab; box-shadow: 1px 0 0 #fff; display: flex; align-items: center; }
  .split div { width: 5px; height: 73px; background: #77756f; display: grid; place-items: center; }
  .decks { flex: 1; display: flex; flex-direction: column; align-items: center; padding: 8px 1px 0 0; }
  .sb { display: grid; place-items: center; width: 24px; height: 33px; flex: none; }
  .sb-deck { height: 30px; border-bottom: 1px solid #dad8d5; box-sizing: border-box; width: 22px; margin-bottom: 4px; padding-bottom: 3px; }
  .sb-wrench { width: 30px; height: 30px; border: 1px solid #b1afab; border-radius: 4px; }
  .sb-page { height: 37px; }
  .sb-styles { height: 36px; }
  .sb-gallery { height: 31px; }
  .sb-compass { height: 41px; }

  footer { flex: 1; border-top: 1px solid #b1afab; display: flex; align-items: center; font-size: 12.5px; color: #4a4843; }
  footer div { box-sizing: border-box; height: 16px; border-left: 1px solid #9c9a95; display: flex; align-items: center; padding-left: 8px; flex: none; }
  footer .s1 { width: 252px; border: 0; padding-left: 10px; }
  .s2 { width: 371px; }
  .s3 { width: 269px; }
  footer .s4 { width: 269px; padding-left: 115px; }
  .s5 { width: 68px; }
  .s6 { width: 29px; }
  .s7 { width: 29px; }
  .s8 { width: 29px; }
  footer .s9 { width: 269px; padding-left: 99px; }
  .s10 { width: 76px; }
  footer .s10 { padding-left: 10px; }
  .s11 { width: 143px; }
  footer .s12 { width: 49px; padding-left: 7px; }
</style>
